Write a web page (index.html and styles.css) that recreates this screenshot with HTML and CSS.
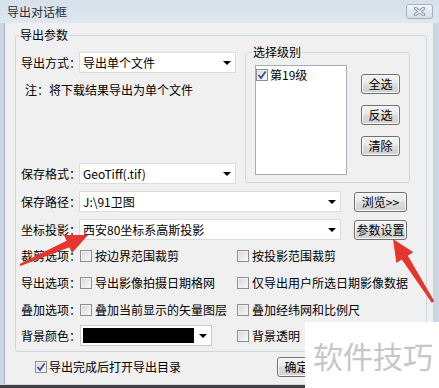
FILE: index.html
```html
<!DOCTYPE html>
<html lang="zh-CN">
<head>
<meta charset="utf-8">
<title>导出对话框</title>
<link rel="stylesheet" href="styles.css">
</head>
<body>
<div class="window">
  <div class="titlebar">
    <span class="title">导出对话框</span>
    <span class="close">
      <svg width="13" height="9" viewBox="0 0 13 9">
        <path d="M2.5 1.5 L10.5 7.5 M10.5 1.5 L2.5 7.5" stroke="#7d8b9b" stroke-width="3.2" stroke-linecap="round"/>
        <path d="M2.5 1.5 L10.5 7.5 M10.5 1.5 L2.5 7.5" stroke="#fafbfc" stroke-width="1.5" stroke-linecap="round"/>
      </svg>
    </span>
  </div>

  <div class="client">
    <fieldset class="group main">
      <legend>导出参数</legend>
      <div class="main-body">
        <div class="top">
          <div class="top-left">
            <div class="row first">
              <span class="lbl">导出方式：</span>
              <div class="combo short"><span>导出单个文件</span><i class="drop"></i></div>
            </div>
            <div class="note">注：将下载结果导出为单个文件</div>
            <div class="row fmt">
              <span class="lbl">保存格式：</span>
              <div class="combo short"><span>GeoTiff(.tif)</span><i class="drop"></i></div>
            </div>
          </div>

          <fieldset class="group level">
            <legend>选择级别</legend>
            <div class="level-body">
              <div class="listbox">
                <div class="item">
                  <span class="chk"><svg width="10" height="10" viewBox="0 0 10 10"><path d="M1.5 5 L4 8 L8.6 1.4" fill="none" stroke="#35538f" stroke-width="1.8"/></svg></span>
                  <span>第19级</span>
                </div>
              </div>
              <div class="btns">
                <button class="btn">全选</button>
                <button class="btn">反选</button>
                <button class="btn">清除</button>
              </div>
            </div>
          </fieldset>
        </div>

        <div class="row c">
          <span class="lbl">保存路径：</span>
          <div class="combo long"><span>J:\91卫图</span><i class="drop"></i></div>
          <button class="btn wide">浏览&gt;&gt;</button>
        </div>
        <div class="row c">
          <span class="lbl">坐标投影：</span>
          <div class="combo long"><span>西安80坐标系高斯投影</span><i class="drop"></i></div>
          <button class="btn wide">参数设置</button>
        </div>

        <div class="row k5">
          <span class="lbl">裁剪选项：</span>
          <label class="opt w"><span class="chk"></span>按边界范围裁剪</label>
          <label class="opt"><span class="chk"></span>按投影范围裁剪</label>
        </div>
        <div class="row k6">
          <span class="lbl">导出选项：</span>
          <label class="opt w"><span class="chk"></span>导出影像拍摄日期格网</label>
          <label class="opt"><span class="chk"></span>仅导出用户所选日期影像数据</label>
        </div>
        <div class="row k6">
          <span class="lbl">叠加选项：</span>
          <label class="opt w"><span class="chk"></span>叠加当前显示的矢量图层</label>
          <label class="opt"><span class="chk"></span>叠加经纬网和比例尺</label>
        </div>
        <div class="row k5">
          <span class="lbl">背景颜色：</span>
          <div class="opt w">
            <div class="combo color"><span class="swatch"></span><i class="drop"></i></div>
          </div>
          <label class="opt"><span class="chk"></span>背景透明</label>
        </div>
      </div>
    </fieldset>

    <div class="footer">
      <label class="opt"><span class="chk"><svg width="10" height="10" viewBox="0 0 10 10"><path d="M1.5 5 L4 8 L8.6 1.4" fill="none" stroke="#35538f" stroke-width="1.8"/></svg></span>导出完成后打开导出目录</label>
      <button class="btn ok">确定</button>
    </div>
  </div>

  <!-- annotations laid over the screenshot -->
  <svg class="marks" width="439" height="388" viewBox="0 0 439 388">
    <polygon fill="#e6342e" points="19.6,264.1 66.6,240.8 64,234.9 88,235 72,253.1 69.4,247.2 20.4,265.9"/>
    <polygon fill="#e6342e" points="434.3,301.2 407.8,255.7 413.3,252.2 393,239 396.4,263 401.8,259.5 431.7,302.8"/>
  </svg>
  <div class="watermark">软件技巧</div>
</div>
</body>
</html>
```

FILE: styles.css
```css
* { box-sizing: border-box; }

body
{
  margin: 0;
  width: 439px;
  height: 388px;
  overflow: hidden;
  background: #fff;
  color: #000;
  font: 12px/16px "Noto Sans CJK SC", "Microsoft YaHei", sans-serif;
}

.window
{
  position: relative;
  height: 388px;
  display: flex;
  flex-direction: column;
  background: #c9d6e4;
  border-bottom: 3px solid #404040;
}

/* title bar */
.titlebar
{
  flex: none;
  height: 23px;
  display: flex;
  align-items: center;
  justify-content: space-between;
  padding: 0 6px 0 7px;
  background: linear-gradient(#d5e0eb, #e0e8f0);
}
.title { color: #2e2e2e; }
.close
{
  width: 27px;
  height: 15px;
  display: flex;
  align-items: center;
  justify-content: center;
  border: 1px solid #a3b1c0;
  border-radius: 3px;
  background: linear-gradient(#f2f5f9, #d7dfe9);
}

/* dialog body */
.client
{
  flex: 1;
  display: flex;
  flex-direction: column;
  margin: 0 6px 1px 4px;
  background: #f0f0f0;
  border-left: 1px solid #a8b5c3;
}

fieldset.group
{
  margin: 0;
  padding: 0;
  min-width: 0;
  border: 1px solid #cfd6dc;
  border-radius: 3px;
}
.group > legend
{
  padding: 0 1px;
  margin-left: 3px;
  line-height: 16px;
}

fieldset.main { margin: 4px 0 0 10px; width: 412px; }
.main-body { padding: 0 0 5px 5px; }

.top { display: flex; align-items: flex-start; }
.top-left { width: 224px; flex: none; }

.row { display: flex; align-items: center; height: 21px; white-space: nowrap; }
.row.first { margin-top: 9px; }
.row.fmt { margin-top: 65px; }
.row.c { margin-top: 7px; }
.row.k5 { margin-top: 5px; }
.row.k6 { margin-top: 6px; }

.lbl { width: 58px; flex: none; white-space: nowrap; }
.note { margin: 9px 0 0 4px; white-space: nowrap; }

/* combo boxes */
.combo
{
  height: 21px;
  flex: none;
  display: flex;
  align-items: center;
  padding-left: 3px;
  background: #fff;
  border: 1px solid #dcdcdc;
  white-space: nowrap;
}
.combo.short { width: 157px; }
.combo.long { width: 262px; }
.combo.color { width: 132px; padding-left: 2px; border-color: #c9c9c9; }
.swatch { width: 111px; height: 15px; background: #000; }
.drop
{
  margin-left: auto;
  margin-right: 4px;
  width: 0;
  height: 0;
  border-left: 4px solid transparent;
  border-right: 4px solid transparent;
  border-top: 4px solid #000;
}

/* level group */
fieldset.level { margin-top: 1px; width: 165px; flex: none; }
.level > legend { margin-left: 6px; }
.level-body { display: flex; align-items: flex-start; padding: 5px 9px 7px 9px; }
.listbox
{
  width: 92px;
  height: 110px;
  flex: none;
  padding: 1px 0 0 0;
  background: #fff;
  border: 1px solid #a5acb5;
}
.item { display: flex; align-items: center; gap: 2px; height: 16px; }
.btns
{
  display: flex;
  flex-direction: column;
  gap: 11px;
  margin: 9px 0 0 14px;
}

/* buttons */
.btn
{
  width: 39px;
  height: 20px;
  flex: none;
  padding: 0;
  font: inherit;
  color: #000;
  white-space: nowrap;
  border: 1px solid #707070;
  border-radius: 3px;
  background: linear-gradient(#f3f3f3, #ebebeb 45%, #dddddd 50%, #cfcfcf);
  box-shadow: inset 0 0 0 1px #fbfbfb;
}
.btn.wide { width: 53px; margin-left: 13px; }
.btn.ok { margin-left: auto; }

/* check boxes */
.opt
{
  display: flex;
  align-items: center;
  gap: 3px;
  white-space: nowrap;
}
.opt.w { width: 157px; flex: none; margin-left: 1px; }
.chk
{
  width: 12px;
  height: 12px;
  flex: none;
  display: flex;
  align-items: center;
  justify-content: center;
  border: 1px solid #8f8f8f;
  background: linear-gradient(135deg, #d6d6d6, #fbfbfb);
  box-shadow: inset 0 0 0 1px #f1f1f1;
}

.footer
{
  display: flex;
  align-items: center;
  height: 20px;
  margin-top: 5px;
  padding: 0 117px 0 30px;
}
.footer .opt { gap: 2px; }

/* overlays */
.marks { position: absolute; left: 0; top: 0; pointer-events: none; }
.watermark
{
  position: absolute;
  left: 305px;
  top: 322px;
  right: 0;
  bottom: -3px;
  padding: 18px 0 0 8px;
  background: #fff;
  color: #c6c6c6;
  font-size: 30px;
  line-height: 30px;
  white-space: nowrap;
}
```
